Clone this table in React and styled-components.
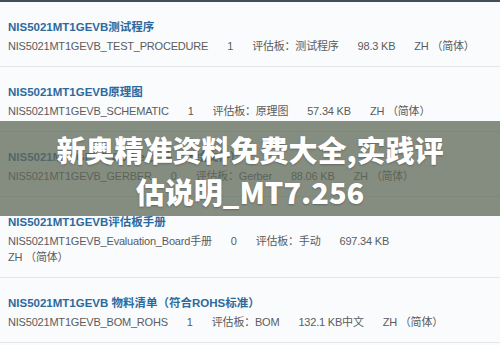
import React from 'react'
import styled, { createGlobalStyle } from 'styled-components'

const GlobalStyle = createGlobalStyle`
  html, body {
    margin: 0;
    padding: 0;
    background: #fafbfc;
  }
  body {
    font-family: "Liberation Sans", "Noto Sans CJK SC", sans-serif;
  }
`

const docs = [
  {
    title: 'NIS5021MT1GEVB测试程序',
    file: 'NIS5021MT1GEVB_TEST_PROCEDURE',
    rev: '1',
    type: '评估板：测试程序',
    size: '98.3 KB',
    lang: 'ZH （简体）',
  },
  {
    title: 'NIS5021MT1GEVB原理图',
    file: 'NIS5021MT1GEVB_SCHEMATIC',
    rev: '1',
    type: '评估板：原理图',
    size: '57.34 KB',
    lang: 'ZH （简体）',
  },
  {
    title: 'NIS5021MT1GEVB Gerber文件（光绘文件）',
    file: 'NIS5021MT1GEVB_GERBER',
    rev: '0',
    type: '评估板：Gerber',
    size: '88.06 KB',
    lang: 'ZH （简体）',
  },
  {
    title: 'NIS5021MT1GEVB评估板手册',
    file: 'NIS5021MT1GEVB_Evaluation_Board手册',
    rev: '0',
    type: '评估板：手动',
    size: '697.34 KB',
    lang: 'ZH （简体）',
    wrapLang: true,
  },
  {
    title: 'NIS5021MT1GEVB 物料清单（符合ROHS标准）',
    file: 'NIS5021MT1GEVB_BOM_ROHS',
    rev: '1',
    type: '评估板：BOM',
    size: '132.1 KB中文',
    lang: 'ZH （简体）',
  },
]

const Page = () => {
  return (
    <Wrapper>
      <GlobalStyle />
      <List>
        {docs.map((d) => (
          <Row key={d.file}>
            <Title>{d.title}</Title>
            <Meta>
              <Cell>{d.file}</Cell>
              <Cell>{d.rev}</Cell>
              <Cell>{d.type}</Cell>
              <Cell>{d.size}</Cell>
              <Cell $newline={d.wrapLang}>{d.lang}</Cell>
            </Meta>
          </Row>
        ))}
      </List>
      <Banner>
        <h1>新奥精准资料免费大全,实践评估说明_MT7.256</h1>
      </Banner>
    </Wrapper>
  )
}

const Wrapper = styled.div`
  position: relative;
  width: 500px;
  height: 345px;
  overflow: hidden;
  border-top: 2px solid #434d57;
  box-sizing: border-box;
  background: #fafbfc;
`

const List = styled.ul`
  list-style: none;
  margin: 0;
  padding: 0;
`

const Row = styled.li`
  padding: 15px 12px 12px 8px;
  border-bottom: 1px solid #e5e7e9;
`

const Title = styled.div`
  font-size: 11.5px;
  line-height: 20px;
  font-weight: 700;
  color: #2c6a9e;
  margin-bottom: 1px;
`

const Meta = styled.div`
  display: flex;
  flex-wrap: wrap;
  column-gap: 19px;
  font-size: 11px;
  line-height: 16px;
  letter-spacing: -0.2px;
  color: #5a5c5e;
`

const Cell = styled.span`
  white-space: nowrap;
  flex-basis: ${(p) => (p.$newline ? '100%' : 'auto')};
`

const Banner = styled.div`
  position: absolute;
  left: 0;
  right: 0;
  top: 119px;
  height: 95px;
  background: rgba(94, 103, 87, 0.75);
  display: flex;
  justify-content: center;
  padding-top: 7px;
  box-sizing: border-box;

  h1 {
    margin: 0;
    width: 402px;
    text-align: center;
    font-family: "Noto Sans CJK SC", "Noto Sans", sans-serif;
    font-weight: 900;
    font-size: 29px;
    line-height: 42px;
    color: #ffffff;
    text-shadow: 0 1px 2px rgba(0, 0, 0, 0.25);
  }
`

export default Page
